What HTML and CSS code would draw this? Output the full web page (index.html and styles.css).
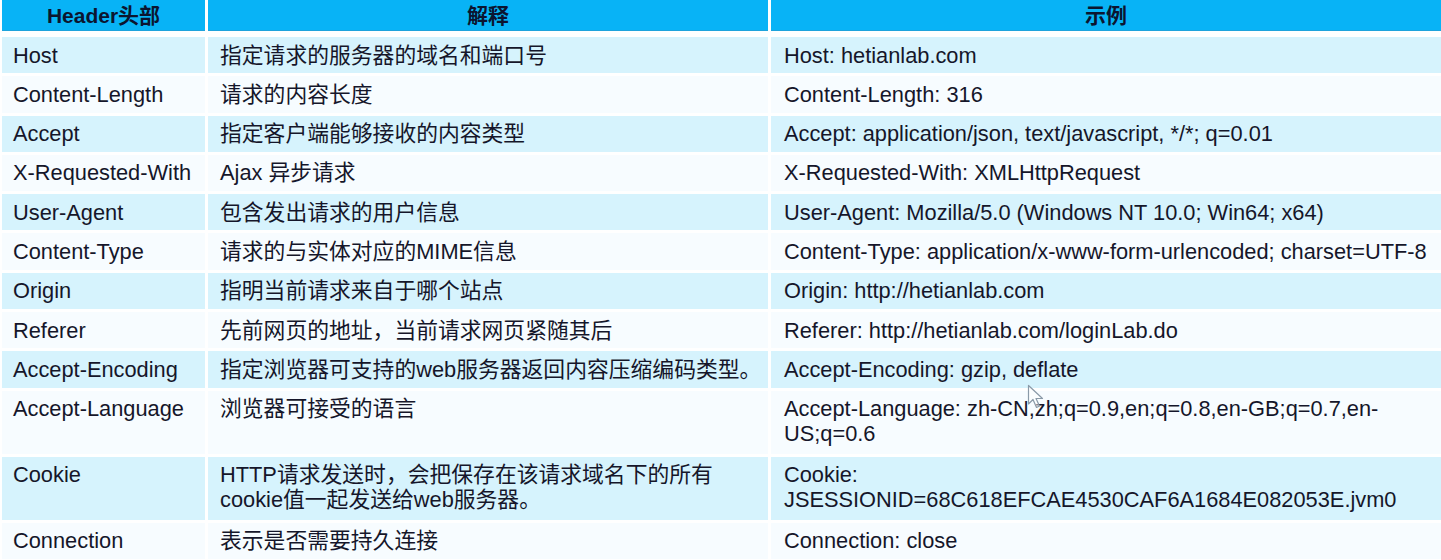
FILE: index.html
```html
<!DOCTYPE html>
<html lang="zh-CN">
<head>
<meta charset="utf-8">
<title>HTTP 请求头</title>
<link rel="stylesheet" href="styles.css">
</head>
<body>
<div class="table">
  <div class="row head">
    <div class="cell">Header头部</div>
    <div class="cell">解释</div>
    <div class="cell">示例</div>
  </div>
  <div class="row alt">
    <div class="cell">Host</div>
    <div class="cell">指定请求的服务器的域名和端口号</div>
    <div class="cell">Host: hetianlab.com</div>
  </div>
  <div class="row">
    <div class="cell">Content-Length</div>
    <div class="cell">请求的内容长度</div>
    <div class="cell">Content-Length: 316</div>
  </div>
  <div class="row alt">
    <div class="cell">Accept</div>
    <div class="cell">指定客户端能够接收的内容类型</div>
    <div class="cell">Accept: application/json, text/javascript, */*; q=0.01</div>
  </div>
  <div class="row">
    <div class="cell">X-Requested-With</div>
    <div class="cell">Ajax 异步请求</div>
    <div class="cell">X-Requested-With: XMLHttpRequest</div>
  </div>
  <div class="row alt">
    <div class="cell">User-Agent</div>
    <div class="cell">包含发出请求的用户信息</div>
    <div class="cell">User-Agent: Mozilla/5.0 (Windows NT 10.0; Win64; x64)</div>
  </div>
  <div class="row">
    <div class="cell">Content-Type</div>
    <div class="cell">请求的与实体对应的MIME信息</div>
    <div class="cell">Content-Type: application/x-www-form-urlencoded; charset=UTF-8</div>
  </div>
  <div class="row alt">
    <div class="cell">Origin</div>
    <div class="cell">指明当前请求来自于哪个站点</div>
    <div class="cell">Origin: http://hetianlab.com</div>
  </div>
  <div class="row">
    <div class="cell">Referer</div>
    <div class="cell">先前网页的地址，当前请求网页紧随其后</div>
    <div class="cell">Referer: http://hetianlab.com/loginLab.do</div>
  </div>
  <div class="row alt">
    <div class="cell">Accept-Encoding</div>
    <div class="cell nowrap">指定浏览器可支持的web服务器返回内容压缩编码类型。</div>
    <div class="cell">Accept-Encoding: gzip, deflate</div>
  </div>
  <div class="row tall">
    <div class="cell">Accept-Language</div>
    <div class="cell">浏览器可接受的语言</div>
    <div class="cell">Accept-Language: zh-CN,zh;q=0.9,en;q=0.8,en-GB;q=0.7,en-US;q=0.6</div>
  </div>
  <div class="row alt tall">
    <div class="cell">Cookie</div>
    <div class="cell">HTTP请求发送时，会把保存在该请求域名下的所有cookie值一起发送给web服务器。</div>
    <div class="cell">Cookie: JSESSIONID=68C618EFCAE4530CAF6A1684E082053E.jvm0</div>
  </div>
  <div class="row">
    <div class="cell">Connection</div>
    <div class="cell">表示是否需要持久连接</div>
    <div class="cell">Connection: close</div>
  </div>
</div>
<svg class="cursor" width="20" height="26" viewBox="0 0 20 26" aria-hidden="true">
  <path d="M1.5 1.5 L1.5 20 L6 15.5 L9.5 23.5 L12.5 22 L9 14.5 L15.5 14.5 Z" fill="#ffffff" fill-opacity="0.5" stroke="#8a9aa8" stroke-width="1.2" stroke-linejoin="round"/>
</svg>
</body>
</html>
```

FILE: styles.css
```css
html, body {
  margin: 0;
  padding: 0;
  background: #ffffff;
}

body {
  position: relative;
  width: 1441px;
  height: 560px;
  overflow: hidden;
  font-family: "Liberation Sans", Arial, "Noto Sans CJK SC", sans-serif;
  font-size: 21.8px;
  color: #15162a;
}

.table {
  display: flex;
  flex-direction: column;
  gap: 3px;
  padding-left: 2px;
}

.row {
  display: grid;
  grid-template-columns: 203px 560px 670px;
  column-gap: 3px;
}

.cell {
  background: #f7fcff;
  padding: 5.65px 4px 5.65px 11px;
  line-height: 25px;
}

.row.tall .cell {
  padding-bottom: 7.5px;
}

.row .cell:nth-child(2) {
  padding-left: 12px;
  padding-right: 0;
}

.row .cell:nth-child(3) {
  padding-left: 13px;
}

.cell.nowrap {
  white-space: nowrap;
}

.row.alt .cell {
  background: #d6f3fd;
}

.row.head {
  margin-bottom: 3px;
}

.row.head .cell {
  background: #08b3f6;
  height: 31px;
  box-sizing: border-box;
  padding: 3px 0 0 0;
  text-align: center;
  font-weight: bold;
  font-size: 21px;
  color: #0b1530;
  border-bottom: 1px solid #1ea3dc;
}

.row.head .cell:nth-child(2),
.row.head .cell:nth-child(3) {
  padding-left: 0;
}

.cursor {
  position: absolute;
  left: 1027px;
  top: 384px;
}
```
